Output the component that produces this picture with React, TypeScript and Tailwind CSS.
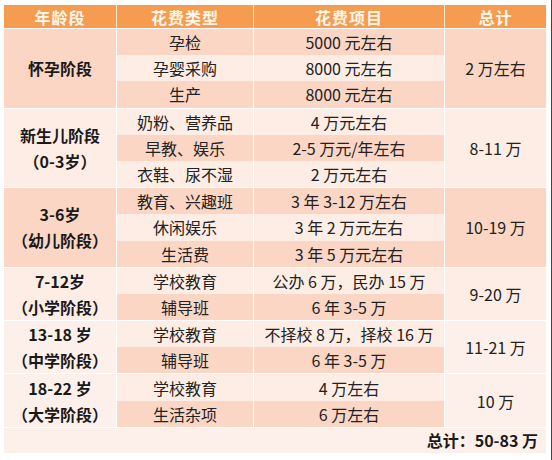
import React from "react";

const DARK = "bg-[#fbd6c5]";
const LIGHT = "bg-[#fdede5]";

type Group = {
  stage: string[];
  stageBg: string;
  totalBg: string;
  total: string;
  rows: [string, string][];
};

const groups: Group[] = [
  {
    stage: ["怀孕阶段"],
    stageBg: DARK,
    totalBg: DARK,
    total: "2 万左右",
    rows: [
      ["孕检", "5000 元左右"],
      ["孕婴采购", "8000 元左右"],
      ["生产", "8000 元左右"],
    ],
  },
  {
    stage: ["新生儿阶段", "（0-3岁）"],
    stageBg: LIGHT,
    totalBg: LIGHT,
    total: "8-11 万",
    rows: [
      ["奶粉、营养品", "4 万元左右"],
      ["早教、娱乐", "2-5 万元/年左右"],
      ["衣鞋、尿不湿", "2 万元左右"],
    ],
  },
  {
    stage: ["3-6岁", "（幼儿阶段）"],
    stageBg: DARK,
    totalBg: DARK,
    total: "10-19 万",
    rows: [
      ["教育、兴趣班", "3 年 3-12 万左右"],
      ["休闲娱乐", "3 年 2 万元左右"],
      ["生活费", "3 年 5 万元左右"],
    ],
  },
  {
    stage: ["7-12岁", "（小学阶段）"],
    stageBg: LIGHT,
    totalBg: LIGHT,
    total: "9-20 万",
    rows: [
      ["学校教育", "公办 6 万，民办 15 万"],
      ["辅导班", "6 年 3-5 万"],
    ],
  },
  {
    stage: ["13-18 岁", "（中学阶段）"],
    stageBg: "bg-[#fdf0ea]",
    totalBg: "bg-[#fdf0ea]",
    total: "11-21 万",
    rows: [
      ["学校教育", "不择校 8 万，择校 16 万"],
      ["辅导班", "6 年 3-5 万"],
    ],
  },
  {
    stage: ["18-22 岁", "（大学阶段）"],
    stageBg: "bg-[#fdf0ea]",
    totalBg: "bg-[#fdf0ea]",
    total: "10 万",
    rows: [
      ["学校教育", "4 万左右"],
      ["生活杂项", "6 万左右"],
    ],
  },
];

export default function App() {
  let rowIndex = 0;
  return (
    <div
      className="relative w-[552px] h-[460px] bg-white pt-[5px] pl-[4px] text-[#222]"
      style={{ fontFamily: '"Noto Sans CJK SC", "Noto Sans", sans-serif' }}
    >
      <div className="w-[542px] flex flex-col gap-px bg-white">
        {/* header */}
        <div className="grid grid-cols-[112px_136px_190px_101px] gap-px bg-[#fde9c8] h-[23px]">
          {["年龄段", "花费类型", "花费项目", "总计"].map((h) => (
            <div
              key={h}
              className="bg-[#f69c50] flex items-center justify-center text-[16px] font-bold text-[#fff6ea] tracking-[1px] leading-none"
            >
              {h}
            </div>
          ))}
        </div>

        {groups.map((g, gi) => (
          <div key={gi} className="flex gap-px">
            <div
              className={`w-[112px] shrink-0 flex flex-col items-center justify-center text-[16px] font-bold text-[#1a1a1a] leading-[26px] ${g.stageBg}`}
            >
              {g.stage.map((s) => (
                <div key={s}>{s}</div>
              ))}
            </div>
            <div className="flex flex-col w-[327px] shrink-0">
              {g.rows.map((r, ri) => {
                const bg = rowIndex % 2 === 0 ? DARK : LIGHT;
                rowIndex++;
                return (
                  <div key={ri} className="grid grid-cols-[136px_190px] gap-px h-[26.2px] bg-white/60">
                    <div className={`flex items-center justify-center text-[16px] leading-none ${bg}`}>
                      {r[0]}
                    </div>
                    <div className={`flex items-center justify-center text-[16px] leading-none ${bg}`}>
                      {r[1]}
                    </div>
                  </div>
                );
              })}
            </div>
            <div
              className={`w-[101px] shrink-0 flex items-center justify-center text-[16px] ${g.totalBg}`}
            >
              {g.total}
            </div>
          </div>
        ))}

        {/* total row */}
        <div className="h-[25px] bg-[#fdefe9] flex items-center justify-end pr-[8px] text-[16px] font-bold text-[#1a1a1a] leading-none">
          总计：50-83 万
        </div>
      </div>
      <div className="absolute right-0 top-0 h-full w-px bg-[#444]" />
    </div>
  );
}
